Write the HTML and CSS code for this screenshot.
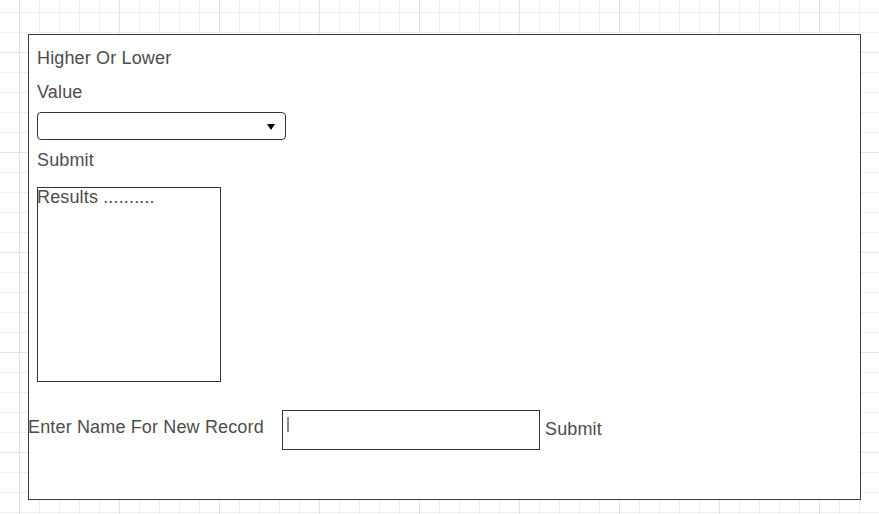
FILE: index.html
```html
<!DOCTYPE html>
<html lang="en">
<head>
<meta charset="utf-8">
<title>Higher Or Lower</title>
<link rel="stylesheet" href="styles.css">
</head>
<body>
<div class="panel">
  <div class="title">Higher Or Lower</div>
  <div class="label">Value</div>
  <div class="select">
    <svg class="arrow" width="8" height="6" viewBox="0 0 8 6"><polygon points="0,0 8,0 4,6" fill="#000"/></svg>
  </div>
  <div class="submit">Submit</div>
  <div class="results">Results ..........</div>
  <div class="record-row">
    <div class="record-label">Enter Name For New Record</div>
    <div class="name-input"><span class="cursor"></span></div>
    <div class="record-submit">Submit</div>
  </div>
</div>
</body>
</html>
```
FILE: styles.css
```css
html, body {
  margin: 0;
  padding: 0;
}
body {
  width: 879px;
  height: 514px;
  overflow: hidden;
  font-family: "Liberation Sans", Arial, sans-serif;
  font-size: 18px;
  line-height: 20px;
  letter-spacing: 0.15px;
  color: #4d4d4d;
  background-color: #ffffff;
  background-image:
    linear-gradient(to right, #e2e2e2 1px, transparent 1px),
    linear-gradient(to bottom, #e2e2e2 1px, transparent 1px),
    linear-gradient(to right, #efefef 1px, transparent 1px),
    linear-gradient(to bottom, #efefef 1px, transparent 1px);
  background-size: 100px 100px, 100px 100px, 20px 20px, 20px 20px;
  background-position: 19px 0, 0 52px, 19px 0, 0 12px;
  padding-top: 34px;
  padding-left: 28px;
  box-sizing: border-box;
}
.panel {
  box-sizing: border-box;
  width: 833px;
  height: 466px;
  border: 1px solid #3d3d3d;
  background: #ffffff;
  padding-left: 8px;
  display: flex;
  flex-direction: column;
  align-items: flex-start;
}
.title {
  margin-top: 13px;
}
.label {
  margin-top: 14px;
}
.select {
  box-sizing: border-box;
  margin-top: 10px;
  width: 249px;
  height: 28px;
  border: 1px solid #333333;
  border-radius: 4px;
  display: flex;
  align-items: center;
  justify-content: flex-end;
  padding-right: 10px;
}
.arrow {
  display: block;
  margin-top: 1px;
}
.submit {
  margin-top: 10px;
}
.results {
  box-sizing: border-box;
  margin-top: 17px;
  width: 184px;
  height: 195px;
  border: 1px solid #333333;
  text-indent: -1px;
  line-height: 19px;
}
.record-row {
  margin-top: 28px;
  margin-left: -9px;
  display: flex;
  align-items: flex-start;
}
.record-label {
  width: 254px;
  margin-top: 7px;
  white-space: nowrap;
}
.name-input {
  box-sizing: border-box;
  width: 258px;
  height: 40px;
  border: 1px solid #333333;
  padding: 6px 0 0 4px;
}
.cursor {
  display: block;
  width: 2px;
  height: 15px;
  background: #8c8c8c;
}
.record-submit {
  margin-left: 5px;
  margin-top: 9px;
}
```
